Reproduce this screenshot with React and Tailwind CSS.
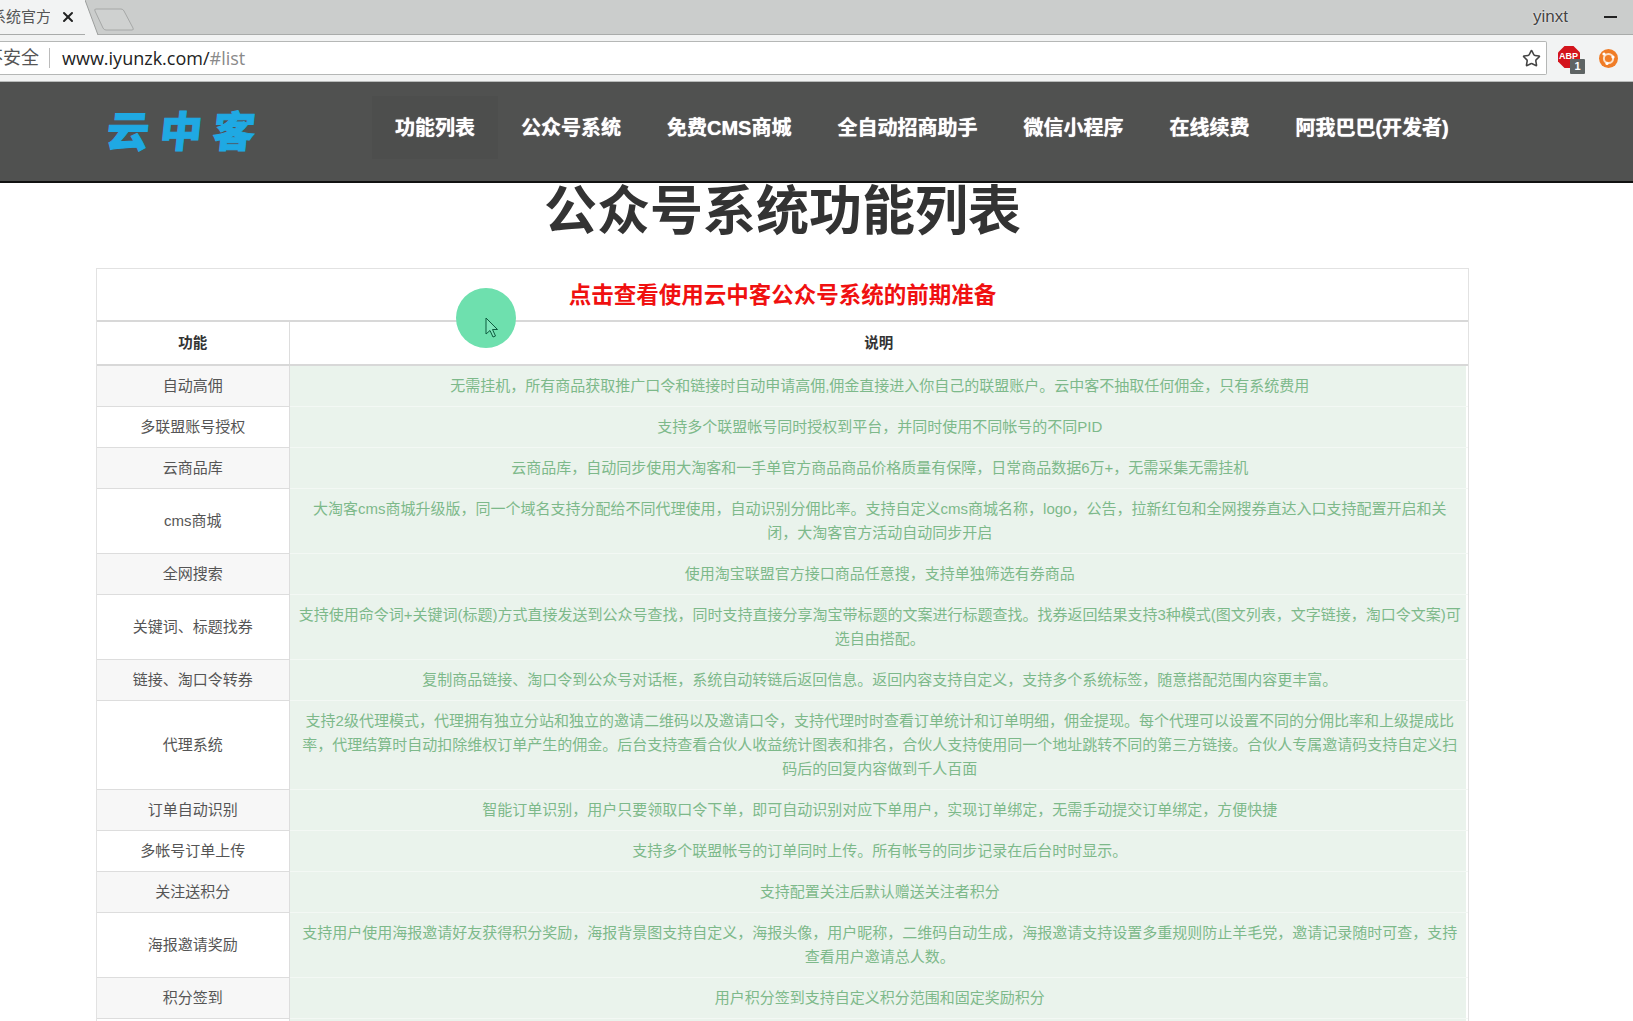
import { Star, X } from 'lucide-react';

const navItems = ['功能列表', '公众号系统', '免费CMS商城', '全自动招商助手', '微信小程序', '在线续费', '阿我巴巴(开发者)'];

const rows = [
  ['自动高佣', '无需挂机，所有商品获取推广口令和链接时自动申请高佣,佣金直接进入你自己的联盟账户。云中客不抽取任何佣金，只有系统费用'],
  ['多联盟账号授权', '支持多个联盟帐号同时授权到平台，并同时使用不同帐号的不同PID'],
  ['云商品库', '云商品库，自动同步使用大淘客和一手单官方商品商品价格质量有保障，日常商品数据6万+，无需采集无需挂机'],
  ['cms商城', '大淘客cms商城升级版，同一个域名支持分配给不同代理使用，自动识别分佣比率。支持自定义cms商城名称，logo，公告，拉新红包和全网搜券直达入口支持配置开启和关闭，大淘客官方活动自动同步开启'],
  ['全网搜索', '使用淘宝联盟官方接口商品任意搜，支持单独筛选有券商品'],
  ['关键词、标题找券', '支持使用命令词+关键词(标题)方式直接发送到公众号查找，同时支持直接分享淘宝带标题的文案进行标题查找。找券返回结果支持3种模式(图文列表，文字链接，淘口令文案)可选自由搭配。'],
  ['链接、淘口令转券', '复制商品链接、淘口令到公众号对话框，系统自动转链后返回信息。返回内容支持自定义，支持多个系统标签，随意搭配范围内容更丰富。'],
  ['代理系统', '支持2级代理模式，代理拥有独立分站和独立的邀请二维码以及邀请口令，支持代理时时查看订单统计和订单明细，佣金提现。每个代理可以设置不同的分佣比率和上级提成比率，代理结算时自动扣除维权订单产生的佣金。后台支持查看合伙人收益统计图表和排名，合伙人支持使用同一个地址跳转不同的第三方链接。合伙人专属邀请码支持自定义扫码后的回复内容做到千人百面'],
  ['订单自动识别', '智能订单识别，用户只要领取口令下单，即可自动识别对应下单用户，实现订单绑定，无需手动提交订单绑定，方便快捷'],
  ['多帐号订单上传', '支持多个联盟帐号的订单同时上传。所有帐号的同步记录在后台时时显示。'],
  ['关注送积分', '支持配置关注后默认赠送关注者积分'],
  ['海报邀请奖励', '支持用户使用海报邀请好友获得积分奖励，海报背景图支持自定义，海报头像，用户昵称，二维码自动生成，海报邀请支持设置多重规则防止羊毛党，邀请记录随时可查，支持查看用户邀请总人数。'],
  ['积分签到', '用户积分签到支持自定义积分范围和固定奖励积分'],
  ['', ''],
];

function TabStrip() {
  return (
    <div className="flex h-[35px] items-stretch bg-[#cbcdcc] border-b border-[#a9abaa]">
      <div className="flex w-[85px] items-center justify-end bg-[#f2f3f3]">
        <div className="w-[50px] shrink-0 overflow-hidden text-[15px] text-[#555]">
          <span className="-ml-[9px] block whitespace-nowrap">系统官方</span>
        </div>
        <X className="ml-[10px] mr-[9px] h-4 w-4 shrink-0 text-[#222]" strokeWidth={3} />
      </div>
      <svg width="56" height="35" viewBox="0 0 56 35" className="shrink-0">
        <path d="M-1 0 H0 L13 35 H-1 Z" fill="#f2f3f3" />
        <path d="M0 0 L13 35" stroke="#9c9e9d" strokeWidth="1" fill="none" />
        <path d="M11 9 H36 Q38 9 39 11 L48 28 Q49 30 47 30 H21 Q19 30 18 28 L10 11 Q9 9 11 9 Z" fill="#cfd1d0" stroke="#a6a8a7" strokeWidth="1" />
      </svg>
      <div className="flex flex-1 items-center justify-end pr-[16px]">
        <span className="mr-[36px] font-['Liberation_Sans',sans-serif] text-[17px] text-[#444] [text-shadow:0_0_2px_#fff]">yinxt</span>
        <span className="h-[2px] w-[13px] bg-[#222]" />
      </div>
    </div>
  );
}

function AbpIcon() {
  return (
    <div className="relative h-[24px] w-[24px]">
      <svg width="22" height="22" viewBox="0 0 22 22">
        <path d="M6.5 0 H15.5 L22 6.5 V15.5 L15.5 22 H6.5 L0 15.5 V6.5 Z" fill="#d3141c" />
      </svg>
      <span className="absolute left-[1px] top-[5px] font-['Liberation_Sans',sans-serif] text-[9px] font-bold leading-[10px] text-white">ABP</span>
      <span className="absolute left-[12px] top-[13px] flex h-[15px] w-[15px] items-center justify-center rounded-[1px] bg-[#5f6464] font-['Liberation_Sans',sans-serif] text-[11px] font-bold leading-none text-white">1</span>
    </div>
  );
}

function OrangeIcon() {
  return (
    <svg width="19" height="19" viewBox="0 0 19 19">
      <circle cx="9.5" cy="9.5" r="9.5" fill="#f07c26" />
      <circle cx="9.5" cy="9.5" r="4.6" fill="none" stroke="#fbe0c8" strokeWidth="2" />
      <circle cx="5" cy="5" r="1.6" fill="#fff" />
      <circle cx="14" cy="8" r="1.6" fill="#fff" />
      <circle cx="8" cy="14.5" r="1.6" fill="#fff" />
    </svg>
  );
}

function Toolbar() {
  return (
    <div className="flex h-[47px] items-center bg-[#f2f3f3] border-b border-[#b9bbba]">
      <div className="flex h-[34px] w-[1547px] items-center rounded-r-[2px] border border-l-0 border-[#b5b7b6] bg-white">
        <div className="flex h-[20px] w-[50px] shrink-0 justify-end overflow-hidden border-r border-[#bbb] pr-[10px]">
          <span className="whitespace-nowrap text-[18px] leading-[20px] text-[#555]">不安全</span>
        </div>
        <span className="ml-[12px] font-['Open_Sans',sans-serif] text-[18px] text-[#222]">
          www.iyunzk.com/<span className="text-[#8a8a8a]">#list</span>
        </span>
        <Star className="ml-auto mr-[5px] h-[19px] w-[19px] text-[#444]" strokeWidth={2} />
      </div>
      <div className="ml-[11px] flex shrink-0 items-center">
        <AbpIcon />
      </div>
      <div className="ml-[17px] flex shrink-0 items-center">
        <OrangeIcon />
      </div>
    </div>
  );
}

function Navbar() {
  return (
    <div className="flex h-[101px] items-center border-b-2 border-[#111] bg-[#505150]">
      <div className="ml-[107px] mt-[2px] w-[265px] shrink-0 -skew-x-6 text-[42px] leading-none font-black tracking-[11px] text-[#1fa9e3] [-webkit-text-stroke:1px_#1fa9e3]">云中客</div>
      <nav className="-mt-[8px] flex">
        {navItems.map((item, i) => (
          <a
            key={item}
            className={`flex h-[63px] items-center whitespace-nowrap px-[23px] text-[20px] font-bold text-white [text-shadow:0_0_1px_#fff] ${i === 0 ? 'bg-[#4d4e4d]' : ''}`}
          >
            {item}
          </a>
        ))}
      </nav>
    </div>
  );
}

function FeatureTable() {
  return (
    <div className="ml-[96px] w-[1373px] border border-[#e2e2e2] bg-white">
      <div className="flex h-[53px] items-center justify-center border-b-2 border-[#d8d8d8] pt-[3px] text-[22.5px] font-bold text-[#f01010]">
        点击查看使用云中客公众号系统的前期准备
      </div>
      <table className="w-full table-fixed border-collapse text-center text-[15px] leading-[24px]">
        <colgroup>
          <col className="w-[192px]" />
          <col />
        </colgroup>
        <thead>
          <tr className="h-[43px] border-b-2 border-[#d8d8d8] font-bold text-[#333]">
            <th className="border-r border-[#ddd] text-[14.5px]">功能</th>
            <th className="text-[14.5px]">说明</th>
          </tr>
        </thead>
        <tbody>
          {rows.map(([name, desc], i) => (
            <tr key={i}>
              <td className={`border-b border-r border-[#dddddd] px-2 py-2 text-[#555] ${i % 2 === 0 ? 'bg-[#f7f7f7]' : 'bg-white'}`}>{name}</td>
              <td className="border-b border-[#f3f8f4] bg-[#eaf3ec] py-2 pl-[9px] pr-[7px] text-[#7db98a] shadow-[inset_-2px_0_0_#fff]">{desc || '\u00a0'}</td>
            </tr>
          ))}
        </tbody>
      </table>
    </div>
  );
}

export default function App() {
  return (
    <div className="relative h-[1021px] w-[1633px] overflow-hidden bg-white font-['Liberation_Sans','Noto_Sans_CJK_SC',sans-serif]">
      <TabStrip />
      <Toolbar />
      <Navbar />
      <h1 className="mb-[30px] ml-[96px] w-[1373px] pt-[3px] text-center text-[53px] leading-[52px] font-bold text-[#333]">公众号系统功能列表</h1>
      <FeatureTable />
      {/* recording highlight round the mouse pointer */}
      <div className="absolute left-[456px] top-[288px] h-[60px] w-[60px] rounded-full bg-[#6ee0ae]">
        <svg width="16" height="22" viewBox="0 0 16 22" className="absolute left-[29px] top-[29px]">
          <path d="M1 1 V17 L5 13.5 L8 20 L10.5 19 L7.5 12.5 H12.5 Z" fill="#7fe6bb" stroke="#0d5c3f" strokeWidth="1" />
        </svg>
      </div>
    </div>
  );
}
